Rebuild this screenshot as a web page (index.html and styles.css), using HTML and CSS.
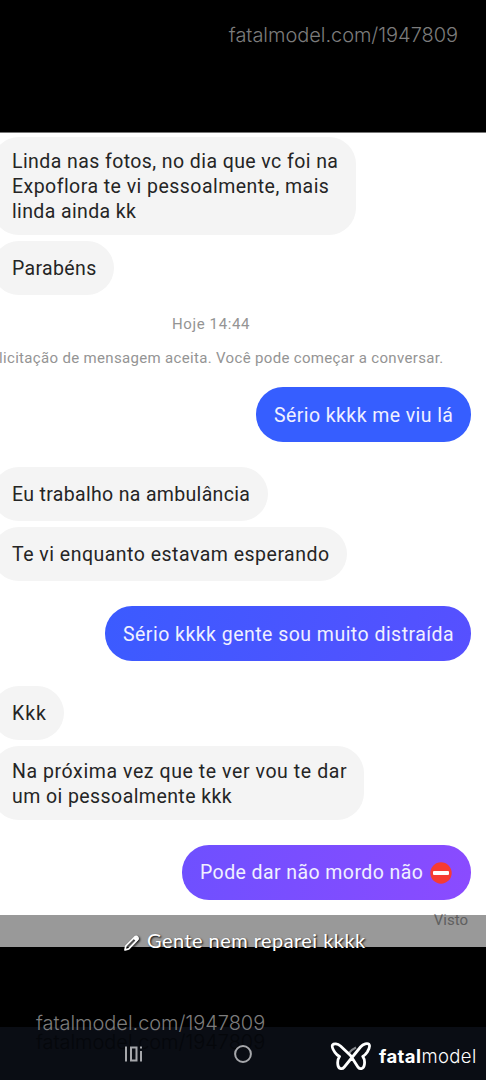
FILE: index.html
```html
<!DOCTYPE html>
<html lang="pt-BR">
<head>
<meta charset="utf-8">
<title>Conversa</title>
<link rel="stylesheet" href="styles.css">
</head>
<body>
<div class="screen">
  <header class="top"><span class="watermark">fatalmodel.com/1947809</span></header>
  <main class="chat">
    <div class="bubble in b1"><span class="l1">Linda nas fotos, no dia que vc foi na</span><br><span class="l2">Expoflora te vi pessoalmente, mais</span><br><span class="l3">linda ainda kk</span></div>
    <div class="bubble in b2"><span>Parabéns</span></div>
    <div class="date"><span>Hoje 14:44</span></div>
    <div class="notice"><span>licitação de mensagem aceita. Você pode começar a conversar.</span></div>
    <div class="bubble out b3"><span>Sério kkkk me viu lá</span></div>
    <div class="bubble in b4"><span>Eu trabalho na ambulância</span></div>
    <div class="bubble in b5"><span>Te vi enquanto estavam esperando</span></div>
    <div class="bubble out b6"><span>Sério kkkk gente sou muito distraída</span></div>
    <div class="bubble in b7"><span>Kkk</span></div>
    <div class="bubble in b8"><span>Na próxima vez que te ver vou te dar</span><br><span class="last">um oi pessoalmente kkk</span></div>
    <div class="bubble out b9"><span>Pode dar não mordo não</span>
      <svg class="stop" viewBox="0 0 22 22"><circle cx="11" cy="11" r="10.7" fill="#f63b32"/><rect x="3" y="9" width="16" height="4" rx="1" fill="#fff"/></svg>
    </div>
    <div class="seen">Visto</div>
  </main>
  <div class="caption">
    <svg class="pencil" viewBox="0 0 18 18"><path d="M2 16l.8-4L11.800 3q1.500-1.200 2.700 0t0 2.700L5.700 14.900z" fill="none" stroke="#fff" stroke-width="1.700" stroke-linejoin="round"/><path d="M10 4.500l3.500 3.300 2.200-2.500-3-3.300z" fill="#fff"/></svg>
    <span>Gente nem reparei kkkk</span>
  </div>
  <div class="marks">
    <span class="watermark">fatalmodel.com/1947809</span>
  </div>
  <footer class="nav">
    <span class="watermark ghost">fatalmodel.com/1947809</span>
    <svg class="recent" viewBox="0 0 20 18"><path d="M2 1.500v15M7 2.500h5.500v13H7zM17 6v10.500M17 1.500v2" fill="none" stroke="#a6a7ab" stroke-width="2"/></svg>
    <svg class="home" viewBox="0 0 20 20"><circle cx="10" cy="10" r="7.900" fill="none" stroke="#a6a7ab" stroke-width="2"/></svg>
    <div class="brand">
      <svg class="logo" viewBox="0 0 42 30"><path d="M18.500 12.500q3-4 7.500-6" stroke="#85878c" stroke-width="2.200" fill="none"/><path d="M20.500 14.500L10.500 5C7.500 2.500 3.800 2.300 2.600 3.800 1.400 5.500 3 8.500 5 11.500c1.300 2 2.800 3 4.500 4-2 2.800-2 5.500-1.700 8 .4 4.300 4 5.500 6.500 2.500L30.500 6C33.500 2.500 37.500 1.800 39 3.300c1.300 1.500.2 4.500-1.700 7.700-1.300 2-2.800 3.400-4.500 4.500 2 2.800 2 5.500 1.600 8-.6 4.300-4 5.500-6.500 2.500z" fill="none" stroke="#fff" stroke-width="2.800" stroke-linecap="round" stroke-linejoin="round"/></svg>
      <span class="name"><b>fatal</b>model</span>
    </div>
  </footer>
</div>
</body>
</html>
```
FILE: styles.css
```css
* { box-sizing: border-box; }
body { margin: 0; background: #000; }
.screen {
  position: relative;
  width: 486px;
  height: 1080px;
  overflow: hidden;
  background: #000;
  display: flex;
  flex-direction: column;
  font-family: Roboto, sans-serif;
}
span { white-space: nowrap; }
.top {
  height: 133px;
  flex: none;
  border-bottom: 1px solid #777;
  padding: 22px 28px 0 0;
  text-align: right;
}
.watermark {
  font: 300 20px/26px Inter, sans-serif;
  letter-spacing: -.04px;
  color: #7c7c7c;
}
.chat {
  height: 814px;
  flex: none;
  background: #fff;
  display: flex;
  flex-direction: column;
  align-items: flex-start;
  padding-top: 4px;
}
.bubble {
  flex: none;
  font-size: 19.5px;
  line-height: 25px;
  letter-spacing: .42px;
  border-radius: 27px;
  height: 54px;
  padding-top: 15px;
}
.in {
  margin-left: -8px;
  padding-left: 20px;
  background: #f4f4f4;
  color: #252525;
}
.out {
  align-self: flex-end;
  margin-right: 15px;
  height: 55px;
  padding-left: 18px;
  color: #f0f0ff;
}
.b1 { width: 364px; height: 98px; padding-top: 12px; }
.l2 { letter-spacing: .46px; }
.l3 { letter-spacing: .37px; }
.b2 { width: 122px; margin-top: 6px; letter-spacing: .35px; }
.date, .notice {
  flex: none;
  font-size: 15px;
  line-height: 20px;
  color: #949494;
}
.date { margin: 19px 0 0 172px; letter-spacing: .62px; }
.notice { margin: 14px 0 0 -1px; letter-spacing: .33px; }
.b3 { width: 215px; margin-top: 19px; padding-top: 16px; background: #365eff; }
.b4 { width: 276px; margin-top: 25px; letter-spacing: .33px; }
.b5 { width: 355px; margin-top: 6px; letter-spacing: .49px; }
.b6 { width: 366px; margin-top: 25px; padding-top: 16px; letter-spacing: .47px; background: linear-gradient(105deg, #3b5bff, #5750ff); }
.b7 { width: 72px; margin-top: 25px; letter-spacing: 1px; }
.b8 { width: 372px; height: 74px; margin-top: 6px; padding-top: 13px; letter-spacing: .58px; }
.last { letter-spacing: .43px; }
.b9 {
  width: 289px;
  margin-top: 25px;
  background: linear-gradient(105deg, #6e50ff, #8b4bff);
  display: flex;
  justify-content: space-between;
  padding-right: 19px;
}
.stop { width: 22px; height: 22px; margin-top: 2px; }
.seen {
  flex: none;
  align-self: flex-end;
  margin: 10px 18px 0 0;
  font-size: 15px;
  line-height: 20px;
  color: #a0a0a0;
}
.caption {
  position: absolute;
  left: 0;
  top: 915px;
  width: 486px;
  height: 50px;
  background: rgba(0, 0, 0, .4);
  display: flex;
  gap: 6px;
  padding: 12px 0 0 123px;
  color: #fff;
  font: 20px/26px Lato, sans-serif;
  letter-spacing: .45px;
  text-shadow: 1px 1px 2px #000;
}
.pencil { width: 18px; height: 18px; margin-top: 7px; filter: drop-shadow(1px 1px 1px #000); }
.marks { height: 80px; flex: none; padding: 63px 0 0 36px; }
.nav {
  position: relative;
  height: 53px;
  flex: none;
  background: #0a0d14;
  display: flex;
  align-items: flex-start;
}
.marks .watermark { position: relative; z-index: 1; }
.ghost { position: absolute; left: 36px; top: 2px; color: #05070b; }
.recent { position: relative; width: 20px; height: 18px; margin: 18px 0 0 124px; }
.home { position: relative; width: 20px; height: 20px; margin: 17px 0 0 89px; }
.brand { display: flex; margin: 14px 0 0 77px; gap: 7px; color: #fff; }
.logo { width: 42px; height: 30px; }
.name { font: 300 18.5px/30px Inter, sans-serif; letter-spacing: .4px; }
.name b { font-weight: 700; }
```
